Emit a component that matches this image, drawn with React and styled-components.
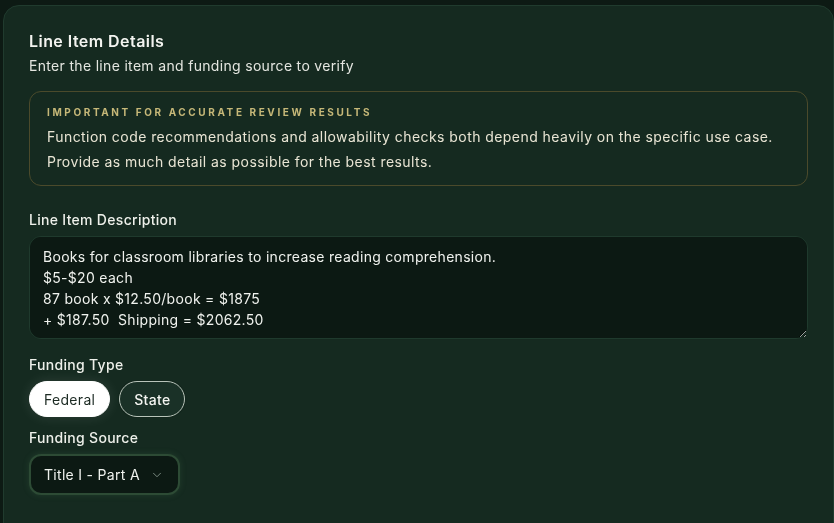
import React, { useState } from 'react';
import styled, { createGlobalStyle } from 'styled-components';
import { ChevronDown } from 'lucide-react';

const GlobalStyle = createGlobalStyle`
  html, body {
    margin: 0;
    padding: 0;
    background: #0d1a14;
    font-family: Inter, "Noto Sans", "Liberation Sans", sans-serif;
    -webkit-font-smoothing: antialiased;
  }
`;

const Page = styled.div`
  padding: 5px 0 0 3px;
  height: 523px;
  box-sizing: border-box;
  overflow: hidden;
`;

const Card = styled.section`
  background: #152a20;
  border: 1px solid #203b2e;
  border-radius: 16px;
  padding: 23px 25px 40px;
  min-height: 560px;
  box-sizing: border-box;
`;

const Title = styled.h2`
  margin: 0 0 3px;
  font-size: 16px;
  line-height: 24px;
  font-weight: 600;
  letter-spacing: 0.45px;
  color: #f3f4f0;
`;

const Subtitle = styled.p`
  margin: 0 0 15px;
  font-size: 14px;
  line-height: 20px;
  letter-spacing: 0.32px;
  color: #e4e6e0;
`;

const Notice = styled.div`
  border: 1px solid #4b4a2b;
  border-radius: 12px;
  padding: 13px 17px 11px;
`;

const NoticeLabel = styled.div`
  font-size: 10px;
  line-height: 15px;
  font-weight: 700;
  letter-spacing: 2.6px;
  color: #c6b878;
  margin-bottom: 4px;
`;

const NoticeText = styled.p`
  margin: 0;
  font-size: 14px;
  line-height: 25px;
  letter-spacing: 0.44px;
  color: #e9e5d4;
`;

const Label = styled.label`
  display: block;
  margin: ${(p) => p.$top}px 0 6px;
  font-size: 14px;
  line-height: 20px;
  font-weight: 500;
  letter-spacing: 0.3px;
  color: #eef0ea;
`;

const TextArea = styled.textarea`
  display: block;
  width: 100%;
  height: 103px;
  box-sizing: border-box;
  padding: 9px 13px;
  background: #0c1913;
  border: 1px solid #1f3a2d;
  border-radius: 12px;
  font-family: inherit;
  font-size: 14px;
  line-height: 21px;
  letter-spacing: 0.3px;
  color: #f0f2ee;
  resize: vertical;
  outline: none;
`;

const PillRow = styled.div`
  display: flex;
  gap: 9px;
`;

const Pill = styled.button`
  height: 36px;
  padding: 0 14px;
  border-radius: 18px;
  font-family: inherit;
  font-size: 14px;
  letter-spacing: 0.3px;
  cursor: pointer;
  border: 1px solid ${(p) => (p.$active ? '#ffffff' : '#b9c4ba')};
  background: ${(p) => (p.$active ? '#ffffff' : '#1a3127')};
  color: ${(p) => (p.$active ? '#1c2a23' : '#f4f5f1')};
  font-weight: ${(p) => (p.$active ? 400 : 500)};
  box-shadow: ${(p) =>
    p.$active ? '0 0 14px rgba(255,255,255,0.10)' : '0 0 0 1px #12261c'};
`;

const Select = styled.button`
  display: inline-flex;
  align-items: center;
  gap: 10px;
  height: 41px;
  padding: 0 14px 0 13px;
  box-sizing: border-box;
  border-radius: 12px;
  background: #0c1913;
  border: 2px solid #2d4b35;
  box-shadow: 0 0 6px rgba(70, 120, 80, 0.25);
  font-family: inherit;
  font-size: 14px;
  letter-spacing: 0.3px;
  color: #f0f2ee;
  cursor: pointer;
`;

const Chevron = styled(ChevronDown)`
  color: #7f8f85;
`;

export default function App() {
  const [fundingType, setFundingType] = useState('Federal');
  const [description, setDescription] = useState(
    'Books for classroom libraries to increase reading comprehension.\n$5-$20 each\n87 book x $12.50/book = $1875\n+ $187.50  Shipping = $2062.50'
  );

  return (
    <Page>
      <GlobalStyle />
      <Card>
        <Title>Line Item Details</Title>
        <Subtitle>Enter the line item and funding source to verify</Subtitle>

        <Notice>
          <NoticeLabel>IMPORTANT FOR ACCURATE REVIEW RESULTS</NoticeLabel>
          <NoticeText>
            Function code recommendations and allowability checks both depend heavily on the specific use case.
          </NoticeText>
          <NoticeText>Provide as much detail as possible for the best results.</NoticeText>
        </Notice>

        <Label $top={24}>Line Item Description</Label>
        <TextArea value={description} onChange={(e) => setDescription(e.target.value)} />

        <Label $top={16}>Funding Type</Label>
        <PillRow>
          {['Federal', 'State'].map((t) => (
            <Pill key={t} $active={fundingType === t} onClick={() => setFundingType(t)}>
              {t}
            </Pill>
          ))}
        </PillRow>

        <Label $top={11}>Funding Source</Label>
        <Select>
          Title I - Part A
          <Chevron size={14} strokeWidth={1.6} />
        </Select>
      </Card>
    </Page>
  );
}
